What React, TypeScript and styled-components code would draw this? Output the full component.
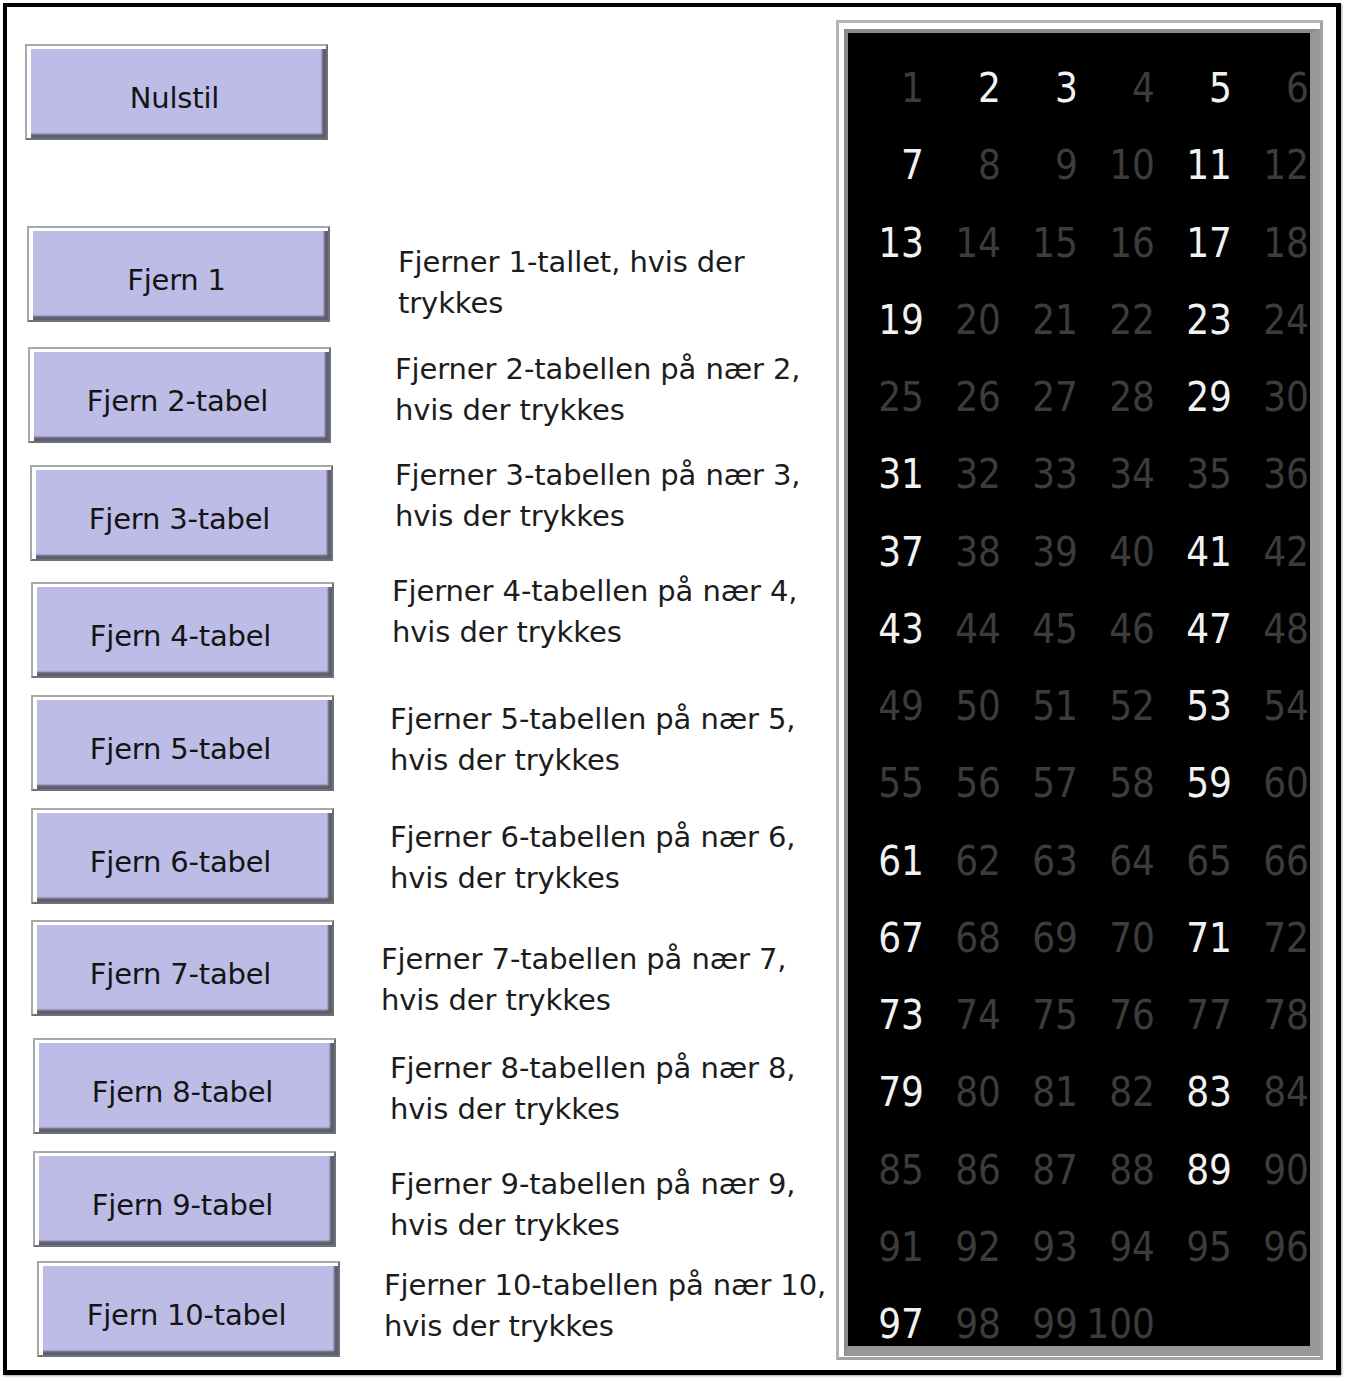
import React, {FC} from "react";
import styled, {createGlobalStyle} from "styled-components";

const GlobalStyle = createGlobalStyle`
  html, body {
    margin: 0;
    padding: 0;
    background: #ffffff;
  }
  body {
    font-family: "DejaVu Sans", Verdana, sans-serif;
  }
`

const Frame = styled.div`
  box-sizing: border-box;
  width: 1338px;
  height: 1372px;
  margin: 3px;
  border: 4px solid #000;
  border-right-width: 5px;
  border-bottom-width: 5px;
  display: flex;
  box-shadow: 1px 1px 2px rgba(0, 0, 0, 0.35);
`

const LeftCol = styled.div`
  width: 829px;
  display: flex;
  flex-direction: column;
`

const BevelButton = styled.button<{ $left: number; $top: number }>`
  box-sizing: border-box;
  width: 303px;
  height: 96px;
  margin-left: ${p => p.$left}px;
  margin-top: ${p => p.$top}px;
  flex-shrink: 0;
  background: #bcbce6;
  border-style: solid;
  border-width: 2px;
  border-color: #a8a8a8 #707078 #707078 #a8a8a8;
  box-shadow: inset 5px 4px 0 -1px #ffffff, inset -5px -5px 2px -1px #5e5e70;
  font-family: "DejaVu Sans", Verdana, sans-serif;
  font-size: 29px;
  letter-spacing: -0.2px;
  color: #141414;
  padding: 12px 4px 0 0;
  cursor: pointer;
  white-space: nowrap;
`

const Row = styled.div<{ $top: number }>`
  display: flex;
  align-items: flex-start;
  margin-top: ${p => p.$top}px;
`

const Description = styled.div<{ $left: number; $shift: number }>`
  margin-left: ${p => p.$left}px;
  margin-top: ${p => p.$shift}px;
  font-size: 29px;
  letter-spacing: -0.1px;
  line-height: 41px;
  color: #1c1c1c;
  white-space: nowrap;
`

const PanelOuter = styled.div`
  box-sizing: border-box;
  margin-top: 13px;
  width: 487px;
  height: 1340px;
  border-style: solid;
  border-width: 3px;
  border-color: #b4b4b4 #a2a2a2 #a2a2a2 #b4b4b4;
  background: #ffffff;
  padding: 6px 0 0 5px;
`

const PanelInner = styled.div`
  border-style: solid;
  border-width: 4px 10px 10px 4px;
  border-color: #8c8c8c #979797 #979797 #8c8c8c;
  width: 462px;
`

const Board = styled.div`
  width: 462px;
  height: 1313px;
  background: #000;
  display: grid;
  grid-template-columns: repeat(6, 77px);
  grid-template-rows: repeat(17, 1fr);
  overflow: hidden;
`

const Cell = styled.div<{ $prime: boolean }>`
  display: flex;
  align-items: flex-end;
  justify-content: flex-end;
  padding: 0 1px 1px 0;
  font-family: "DejaVu Sans Condensed", "DejaVu Sans", Verdana, sans-serif;
  font-stretch: semi-condensed;
  font-size: 40px;
  line-height: 41px;
  color: ${p => (p.$prime ? "#f2f2f2" : "#3c3c3c")};
  white-space: nowrap;
`

interface IRemoveRow {
    label: string;
    lines: string[];
    gap: number;
    btnLeft: number;
    textLeft: number;
    textShift: number;
}

const rows: IRemoveRow[] = [
    {label: "Fjern 1", lines: ["Fjerner 1-tallet, hvis der", "trykkes"], gap: 86, btnLeft: 20, textLeft: 68, textShift: 16},
    {label: "Fjern 2-tabel", lines: ["Fjerner 2-tabellen på nær 2,", "hvis der trykkes"], gap: 23, btnLeft: 21, textLeft: 64, textShift: 2},
    {label: "Fjern 3-tabel", lines: ["Fjerner 3-tabellen på nær 3,", "hvis der trykkes"], gap: 22, btnLeft: 23, textLeft: 62, textShift: -10},
    {label: "Fjern 4-tabel", lines: ["Fjerner 4-tabellen på nær 4,", "hvis der trykkes"], gap: 21, btnLeft: 24, textLeft: 58, textShift: -11},
    {label: "Fjern 5-tabel", lines: ["Fjerner 5-tabellen på nær 5,", "hvis der trykkes"], gap: 17, btnLeft: 24, textLeft: 56, textShift: 4},
    {label: "Fjern 6-tabel", lines: ["Fjerner 6-tabellen på nær 6,", "hvis der trykkes"], gap: 17, btnLeft: 24, textLeft: 56, textShift: 9},
    {label: "Fjern 7-tabel", lines: ["Fjerner 7-tabellen på nær 7,", "hvis der trykkes"], gap: 16, btnLeft: 24, textLeft: 47, textShift: 19},
    {label: "Fjern 8-tabel", lines: ["Fjerner 8-tabellen på nær 8,", "hvis der trykkes"], gap: 17, btnLeft: 26, textLeft: 54, textShift: 10},
    {label: "Fjern 9-tabel", lines: ["Fjerner 9-tabellen på nær 9,", "hvis der trykkes"], gap: 17, btnLeft: 26, textLeft: 54, textShift: 13},
    {label: "Fjern 10-tabel", lines: ["Fjerner 10-tabellen på nær 10,", "hvis der trykkes"], gap: 14, btnLeft: 30, textLeft: 44, textShift: 4},
];

const isPrime = (n: number) => {
    if (n < 2) return false;
    for (let i = 2; i * i <= n; i++) {
        if (n % i === 0) return false;
    }
    return true;
}

const numbers = Array.from({length: 100}, (_, i) => i + 1);

const App: FC = () => {
    return (
        <React.Fragment>
            <GlobalStyle/>
            <Frame>
                <LeftCol>
                    <BevelButton $left={18} $top={37}>Nulstil</BevelButton>
                    {
                        rows.map(row => (
                            <Row key={row.label} $top={row.gap}>
                                <BevelButton $left={row.btnLeft} $top={0}>{row.label}</BevelButton>
                                <Description $left={row.textLeft} $shift={row.textShift}>
                                    {row.lines.map(line => <div key={line}>{line}</div>)}
                                </Description>
                            </Row>
                        ))
                    }
                </LeftCol>
                <PanelOuter>
                    <PanelInner>
                        <Board>
                            {numbers.map(n => <Cell key={n} $prime={isPrime(n)}>{n}</Cell>)}
                        </Board>
                    </PanelInner>
                </PanelOuter>
            </Frame>
        </React.Fragment>
    )
}

export default App;
